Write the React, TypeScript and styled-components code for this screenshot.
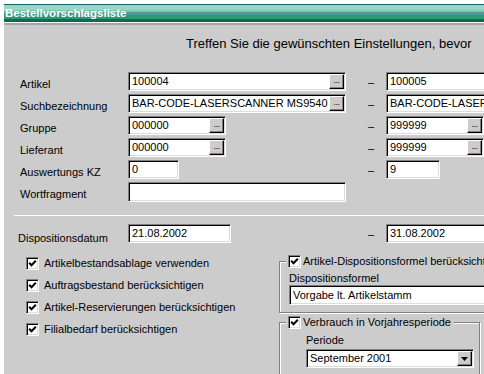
import React, { FC } from "react";
import styled, { createGlobalStyle } from "styled-components";

const GlobalStyle = createGlobalStyle`
  body {
    margin: 0;
    background: #fff;
    font-family: "Liberation Sans", Arial, sans-serif;
    font-size: 11px;
    color: #000;
  }
`;

const Window = styled.div`
  margin: 4px 0 0 4px;
  width: 480px;
  height: 370px;
  overflow: hidden;
  background: #cccccc;
  display: flex;
  flex-direction: column;
`;

const TitleBar = styled.div`
  flex-shrink: 0;
  height: 18px;
  padding-left: 1px;
  line-height: 18px;
  font-size: 11.5px;
  font-weight: bold;
  color: #fff;
  white-space: nowrap;
  background: linear-gradient(
    to bottom,
    #0b6b66 0 1px,
    #9fd2cf 1px 6px,
    #74cf9e 6px 8px,
    #4f9a96 8px 11px,
    #2a9a72 11px 15px,
    #0b6a52 15px 18px
  );
`;

const TitleRule = styled.div`
  flex-shrink: 0;
  height: 2px;
  border-top: 1px solid #f4f4f4;
  background: #a4a4a4;
`;

const Intro = styled.div`
  margin-top: 11px;
  padding-left: 182px;
  font-size: 13px;
  line-height: 16px;
  white-space: nowrap;
`;

const FieldGrid = styled.div`
  margin-top: 20px;
  padding-left: 16px;
  display: grid;
  grid-template-columns: 108px 242px 16px 240px;
  grid-auto-rows: 19px;
  row-gap: 3px;
`;

const Label = styled.div<{ $drop?: number }>`
  align-self: end;
  line-height: 13px;
  white-space: nowrap;
  position: relative;
  top: ${(p) => p.$drop ?? 0}px;
`;

const Dash = styled.div`
  align-self: center;
  line-height: 13px;
  padding-top: 2px;
  margin-left: -2px;
`;

const TextBox = styled.div<{ $w: number; $h?: number }>`
  flex-shrink: 0;
  box-sizing: border-box;
  width: ${(p) => p.$w}px;
  height: ${(p) => p.$h ?? 19}px;
  background: #fff;
  border-style: solid;
  border-width: 1px;
  border-color: #808080 #fff #fff #808080;
  box-shadow: inset 1px 1px 0 #000, inset -1px -1px 0 #dcdcdc;
  display: flex;
  align-items: center;
  padding: 1px 1px 1px 3px;
  white-space: nowrap;
  overflow: hidden;
`;

const Value = styled.span`
  flex: 1;
  overflow: hidden;
  line-height: 13px;
`;

const PickButton = styled.div`
  flex-shrink: 0;
  box-sizing: border-box;
  width: 15px;
  height: 15px;
  background: #cccccc;
  border-style: solid;
  border-width: 1px;
  border-color: #fff #000 #000 #fff;
  box-shadow: inset -1px -1px 0 #808080;
  font-size: 9px;
  line-height: 11px;
  text-align: center;
  letter-spacing: -0.5px;
`;

const Rule = styled.div`
  margin: 14px 0 0 10px;
  height: 1px;
  background: #808080;
  border-bottom: 1px solid #fff;
`;

const DateGrid = styled(FieldGrid)`
  margin-top: 8px;
  padding-left: 14px;
  grid-template-columns: 110px 242px 16px 240px;
`;

const Lower = styled.div`
  display: flex;
  margin-top: 12px;
`;

const CheckList = styled.div`
  flex-shrink: 0;
  width: 253px;
  padding: 2px 0 0 22px;
  display: flex;
  flex-direction: column;
  gap: 9px;
`;

const CheckRow = styled.div`
  display: flex;
  align-items: center;
  gap: 5px;
  height: 13px;
  white-space: nowrap;
  line-height: 13px;
`;

const Box = styled.div`
  flex-shrink: 0;
  box-sizing: border-box;
  width: 13px;
  height: 13px;
  background: #fff;
  border-style: solid;
  border-width: 1px;
  border-color: #808080 #fff #fff #808080;
  box-shadow: inset 1px 1px 0 #000, inset -1px -1px 0 #dcdcdc;
  display: flex;
  align-items: center;
  justify-content: center;
`;

const GroupColumn = styled.div`
  flex-shrink: 0;
  display: flex;
  flex-direction: column;
  gap: 3px;
`;

const Group = styled.fieldset<{ $w: number }>`
  box-sizing: border-box;
  width: ${(p) => p.$w}px;
  margin: 0;
  padding: 1px 0 7px 0;
  border: 1px solid #808080;
  box-shadow: inset 1px 1px 0 #fff, 1px 1px 0 #fff;
  min-inline-size: 0;
`;

const Legend = styled.legend`
  margin-left: 6px;
  padding: 0 3px 0 2px;
  background: #cccccc;
  display: flex;
  align-items: center;
  gap: 2px;
  white-space: nowrap;
  line-height: 13px;
  height: 13px;
`;

const GroupBody = styled.div<{ $pad: number; $top: number }>`
  padding: ${(p) => p.$top}px 4px 0 ${(p) => p.$pad}px;
`;

const GroupLabel = styled.div<{ $gap: number }>`
  line-height: 13px;
  margin-bottom: ${(p) => p.$gap}px;
  white-space: nowrap;
`;

const DropButton = styled(PickButton)`
  display: flex;
  align-items: center;
  justify-content: center;
`;

const Check: FC = () => (
  <Box>
    <svg width="9" height="9" viewBox="0 0 9 9">
      <polyline points="1.2,3.8 3.5,6.2 7.8,1.8" fill="none" stroke="#000" strokeWidth="2" />
    </svg>
  </Box>
);

const Picker: FC<{ w: number; value: string }> = ({ w, value }) => (
  <TextBox $w={w}>
    <Value>{value}</Value>
    <PickButton>...</PickButton>
  </TextBox>
);

const Field: FC<{ w: number; value: string; h?: number }> = ({ w, value, h }) => (
  <TextBox $w={w} $h={h}>
    <Value>{value}</Value>
  </TextBox>
);

const options = [
  "Artikelbestandsablage verwenden",
  "Auftragsbestand berücksichtigen",
  "Artikel-Reservierungen berücksichtigen",
  "Filialbedarf berücksichtigen",
];

const App: FC = () => (
  <>
    <GlobalStyle />
    <Window>
      <TitleBar>Bestellvorschlagsliste</TitleBar>
      <TitleRule />
      <Intro>Treffen Sie die gewünschten Einstellungen, bevor</Intro>

      <FieldGrid>
        <Label>Artikel</Label>
        <Picker w={218} value="100004" />
        <Dash>–</Dash>
        <Picker w={218} value="100005" />

        <Label>Suchbezeichnung</Label>
        <Picker w={218} value="BAR-CODE-LASERSCANNER MS9540 MetroSelect" />
        <Dash>–</Dash>
        <Picker w={218} value="BAR-CODE-LASERSCANNER MS9540 MetroSelect" />

        <Label>Gruppe</Label>
        <Picker w={98} value="000000" />
        <Dash>–</Dash>
        <Picker w={98} value="999999" />

        <Label>Lieferant</Label>
        <Picker w={98} value="000000" />
        <Dash>–</Dash>
        <Picker w={98} value="999999" />

        <Label>Auswertungs KZ</Label>
        <Field w={51} value="0" />
        <Dash>–</Dash>
        <Field w={54} value="9" />

        <Label>Wortfragment</Label>
        <Field w={218} h={20} value="" />
      </FieldGrid>

      <Rule />

      <DateGrid>
        <Label $drop={2}>Dispositionsdatum</Label>
        <Field w={103} value="21.08.2002" />
        <Dash>–</Dash>
        <Field w={103} value="31.08.2002" />
      </DateGrid>

      <Lower>
        <CheckList>
          {options.map((o) => (
            <CheckRow key={o}>
              <Check />
              {o}
            </CheckRow>
          ))}
        </CheckList>

        <GroupColumn>
          <Group $w={240}>
            <Legend>
              <Check />
              Artikel-Dispositionsformel berücksichtigen
            </Legend>
            <GroupBody $pad={9} $top={3}>
              <GroupLabel $gap={0}>Dispositionsformel</GroupLabel>
              <Field w={220} h={20} value="Vorgabe lt. Artikelstamm" />
            </GroupBody>
          </Group>

          <Group $w={201}>
            <Legend>
              <Check />
              Verbrauch in Vorjahresperiode
            </Legend>
            <GroupBody $pad={26} $top={4}>
              <GroupLabel $gap={2}>Periode</GroupLabel>
              <TextBox $w={168}>
                <Value>September 2001</Value>
                <DropButton>
                  <svg width="7" height="4" viewBox="0 0 7 4">
                    <polygon points="0,0 7,0 3.5,4" fill="#000" />
                  </svg>
                </DropButton>
              </TextBox>
            </GroupBody>
          </Group>
        </GroupColumn>
      </Lower>
    </Window>
  </>
);

export default App;
